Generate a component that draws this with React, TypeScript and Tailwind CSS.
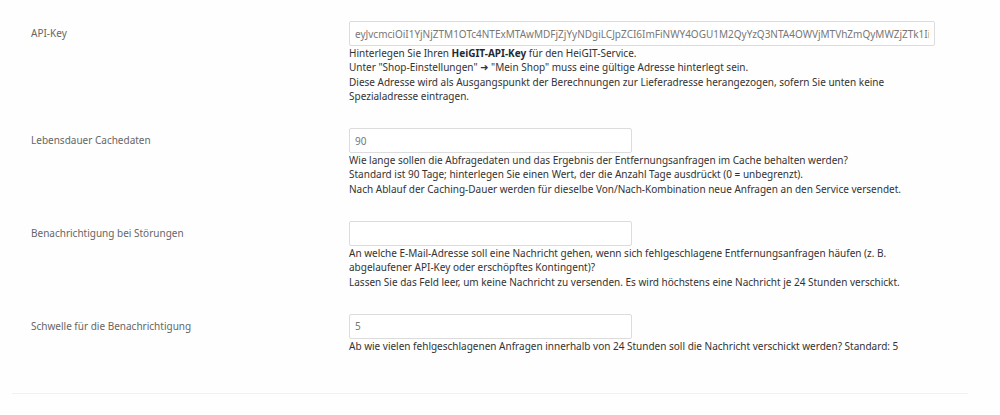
import React from "react";

const font = { fontFamily: '"Noto Sans", "Open Sans", "DejaVu Sans", sans-serif' };

function Row({
  label,
  value,
  wide,
  children,
  last,
}: {
  label: string;
  value: string;
  wide?: boolean;
  children: React.ReactNode;
  last?: boolean;
}) {
  return (
    <div className={`flex ${last ? "" : "mb-[25px]"}`}>
      <div className="w-[337px] shrink-0 pl-[19px] pt-[5px] text-[10px] leading-[14.3px] text-[#666]">
        {label}
      </div>
      <div className="flex flex-col">
        <input
          readOnly
          defaultValue={value}
          className={`${wide ? "w-[586px]" : "w-[283px]"} h-[25px] rounded-[2px] border border-[#dcdcdc] bg-white px-[5px] text-[10px] text-[#777] outline-none`}
          style={font}
        />
        <div className="text-[10px] leading-[14.3px] text-[#333]">{children}</div>
      </div>
    </div>
  );
}

export default function App() {
  return (
    <div className="w-[1000px] h-[415px] bg-[#fefefe] overflow-hidden" style={font}>
      <div className="mx-[12px] w-[956px] border-b border-[#f1f1f1] pt-[21px] pb-[40px]">
        <Row
          label="API-Key"
          wide
          value="eyJvcmciOiI1YjNjZTM1OTc4NTExMTAwMDFjZjYyNDgiLCJpZCI6ImFiNWY4OGU1M2QyYzQ3NTA4OWVjMTVhZmQyMWZjZTk1IiwiaCI6Im11cm11cjY0In0="
        >
          Hinterlegen Sie Ihren <b className="font-bold text-[#1e2b36]">HeiGIT-API-Key</b> für den HeiGIT-Service.
          <br />
          Unter "Shop-Einstellungen" <span className="font-bold">➜</span> "Mein Shop" muss eine gültige Adresse hinterlegt sein.
          <br />
          Diese Adresse wird als Ausgangspunkt der Berechnungen zur Lieferadresse herangezogen, sofern Sie unten keine
          <br />
          Spezialadresse eintragen.
        </Row>
        <Row label="Lebensdauer Cachedaten" value="90">
          Wie lange sollen die Abfragedaten und das Ergebnis der Entfernungsanfragen im Cache behalten werden?
          <br />
          Standard ist 90 Tage; hinterlegen Sie einen Wert, der die Anzahl Tage ausdrückt (0 = unbegrenzt).
          <br />
          Nach Ablauf der Caching-Dauer werden für dieselbe Von/Nach-Kombination neue Anfragen an den Service versendet.
        </Row>
        <Row label="Benachrichtigung bei Störungen" value="">
          An welche E-Mail-Adresse soll eine Nachricht gehen, wenn sich fehlgeschlagene Entfernungsanfragen häufen (z. B.
          <br />
          abgelaufener API-Key oder erschöpftes Kontingent)?
          <br />
          Lassen Sie das Feld leer, um keine Nachricht zu versenden. Es wird höchstens eine Nachricht je 24 Stunden verschickt.
        </Row>
        <Row label="Schwelle für die Benachrichtigung" value="5" last>
          Ab wie vielen fehlgeschlagenen Anfragen innerhalb von 24 Stunden soll die Nachricht verschickt werden? Standard: 5
        </Row>
      </div>
    </div>
  );
}
